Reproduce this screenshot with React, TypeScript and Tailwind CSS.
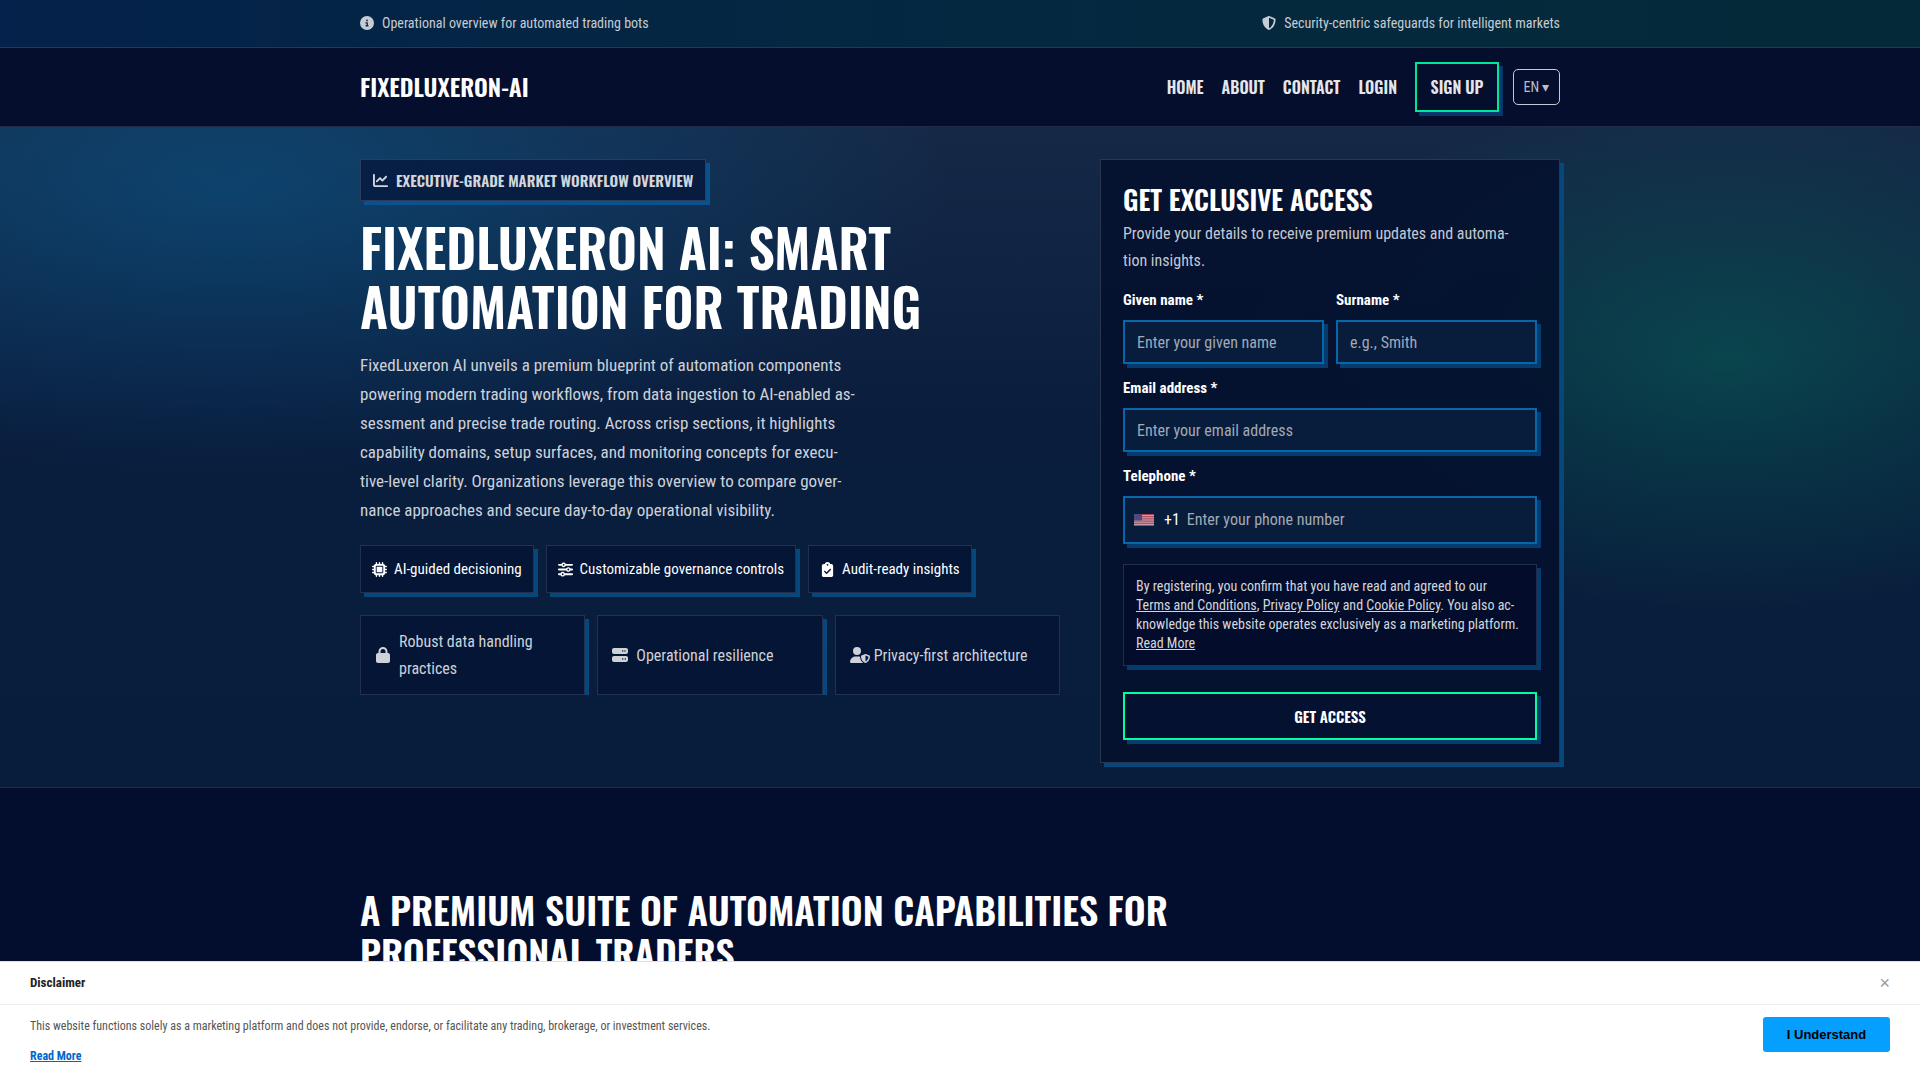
import type { ReactNode } from "react";
import {
  FaChartLine,
  FaCircleInfo,
  FaClipboardCheck,
  FaLock,
  FaMicrochip,
  FaServer,
  FaShieldHalved,
  FaSliders,
  FaUserShield,
} from "react-icons/fa6";

const navLinks = ["Home", "About", "Contact", "Login"];

const chips = [
  { icon: <FaMicrochip size={15} />, label: "AI-guided decisioning" },
  { icon: <FaSliders size={15} />, label: "Customizable governance controls" },
  { icon: <FaClipboardCheck size={15} />, label: "Audit-ready insights" },
];

const features = [
  { icon: <FaLock size={16} />, label: "Robust data handling practices" },
  { icon: <FaServer size={16} />, label: "Operational resilience" },
  { icon: <FaUserShield size={20} />, label: "Privacy-first architecture" },
];

interface IField {
  id: string;
  label: string;
  children: ReactNode;
}

const Field = ({ id, label, children }: IField) => (
  <div className="min-w-0">
    <label htmlFor={id} className="mb-[7px] block text-[15px] leading-[26px] font-bold text-white">
      {label} *
    </label>
    {children}
  </div>
);

const inputStyle =
  "block h-11 w-full border-2 border-[#0667a8] bg-[#081c3b] px-3 text-base text-white placeholder:text-[#a1a9b7] shadow-[4px_4px_0_#043c70] outline-none";

const UsFlag = () => (
  <svg width="20" height="12" viewBox="0 0 40 26" preserveAspectRatio="none" className="shrink-0 opacity-85">
    <rect width="40" height="26" fill="#e8c9ce" />
    {[0, 4, 8, 12, 16, 20, 24].map((y) => (
      <rect key={y} y={y} width="40" height="2" fill="#c93f50" />
    ))}
    <rect width="16" height="14" fill="#56548a" />
  </svg>
);

const AccessForm = () => (
  <form
    onSubmit={(e) => e.preventDefault()}
    className="border border-[#283650] bg-[#040f2d]/85 p-[22px] shadow-[4px_4px_0_#06487c]">
    <h2 className="mb-1 font-['Oswald',sans-serif] text-[27px] leading-[34px] font-semibold text-white uppercase">
      Get exclusive access
    </h2>
    <p className="text-base leading-[27px] text-[#c3c8d0]">
      Provide your details to receive premium updates and automa-
      <br />
      tion insights.
    </p>

    <div className="mt-[13px] flex flex-col gap-[11px]">
      <div className="grid grid-cols-2 gap-3">
        <Field id="given" label="Given name">
          <input id="given" type="text" placeholder="Enter your given name" className={inputStyle} />
        </Field>
        <Field id="surname" label="Surname">
          <input id="surname" type="text" placeholder="e.g., Smith" className={inputStyle} />
        </Field>
      </div>
      <Field id="email" label="Email address">
        <input id="email" type="email" placeholder="Enter your email address" className={inputStyle} />
      </Field>
      <Field id="phone" label="Telephone">
        <div className="flex h-12 items-center border-2 border-[#0667a8] bg-[#081c3b] px-[9px] shadow-[4px_4px_0_#043c70]">
          <UsFlag />
          <span className="ml-[10px] text-base text-white">+1</span>
          <input
            id="phone"
            type="tel"
            placeholder="Enter your phone number"
            className="ml-[7px] min-w-0 flex-1 bg-transparent text-base text-white outline-none placeholder:text-[#a1a9b7]"
          />
        </div>
      </Field>
    </div>

    <div className="mt-5 border border-[#212d4b] bg-[#030d2b] p-3 text-sm leading-[19px] text-[#d3d6dc] shadow-[4px_4px_0_#043c70]">
      By registering, you confirm that you have read and agreed to our
      <br />
      <a href="#terms" className="underline">Terms and Conditions</a>,{" "}
      <a href="#privacy" className="underline">Privacy Policy</a> and{" "}
      <a href="#cookies" className="underline">Cookie Policy</a>. You also ac-
      <br />
      knowledge this website operates exclusively as a marketing platform.
      <br />
      <a href="#more" className="underline">Read More</a>
    </div>

    <button
      type="submit"
      className="mt-[26px] h-12 w-full border-2 border-[#00ff9f] bg-[#041130] font-['Oswald',sans-serif] text-[15px] font-semibold text-white uppercase shadow-[4px_4px_0_#043c70]">
      Get access
    </button>
  </form>
);

const Disclaimer = () => (
  <div className="fixed inset-x-0 bottom-0 h-[119px] border-t border-[#e0e0e0] bg-white">
    <div className="flex h-[43px] items-center justify-between border-b border-[#eeeeee] px-[30px]">
      <h2 className="text-[13px] font-bold text-[#222222]">Disclaimer</h2>
      <button
        type="button"
        aria-label="Close"
        className="font-['Liberation_Sans',sans-serif] text-lg leading-none text-[#999999]">
        ×
      </button>
    </div>
    <div className="flex items-start justify-between px-[30px] pt-3">
      <div className="text-xs leading-[18px] text-[#555555]">
        <p>
          This website functions solely as a marketing platform and does not provide, endorse, or
          facilitate any trading, brokerage, or investment services.
        </p>
        <a href="#disclaimer" className="mt-3 block w-fit font-bold text-[#0066cc] underline">
          Read More
        </a>
      </div>
      <button
        type="button"
        className="h-[35px] w-[127px] rounded-[3px] bg-[#059fff] font-['Liberation_Sans',sans-serif] text-[13px] font-bold text-black">
        I Understand
      </button>
    </div>
  </div>
);

const App = () => {
  return (
    <div className="min-h-screen bg-[#030d2e] font-['Roboto_Condensed',sans-serif] text-[#d3d6dc]">
      {/* Top strip */}
      <div className="border-b border-[#1d3d54] bg-[linear-gradient(90deg,#04224b,#042545_25%,#04293f_60%,#042a38)]">
        <div className="mx-auto flex h-[47px] max-w-[1200px] items-center justify-between pb-0.5 text-sm text-[#c5ccd4]">
          <p className="flex items-center gap-2">
            <FaCircleInfo size={14} /> Operational overview for automated trading bots
          </p>
          <p className="flex items-center gap-2">
            <FaShieldHalved size={14} /> Security-centric safeguards for intelligent markets
          </p>
        </div>
      </div>

      {/* Header */}
      <header className="border-b border-[#1f2b48] bg-[#050f2d]">
        <div className="mx-auto flex h-[78px] max-w-[1200px] items-center justify-between">
          <a
            href="#top"
            className="pb-0.5 font-['Oswald',sans-serif] text-2xl font-semibold text-white uppercase">
            FixedLuxeron-AI
          </a>
          <nav className="flex items-center gap-[18px] font-['Oswald',sans-serif] text-base font-semibold text-[#e4e6ea] uppercase">
            {navLinks.map((link) => (
              <a key={link} href={`#${link.toLowerCase()}`}>
                {link}
              </a>
            ))}
            <a
              href="#signup"
              className="flex h-[50px] w-[84px] items-center justify-center border-2 border-[#00e69a] shadow-[4px_4px_0_#04386b]">
              Sign up
            </a>
            <button
              type="button"
              className="-ml-1 h-9 w-[47px] rounded-[5px] border border-[#c5c9d3] font-['Roboto_Condensed',sans-serif] text-sm font-normal text-[#b9bec9]">
              EN ▾
            </button>
          </nav>
        </div>
      </header>

      {/* Hero */}
      <section className="border-b border-[#1f2b48] bg-[radial-gradient(720px_290px_at_12%_9%,rgba(5,105,165,0.42),transparent),radial-gradient(500px_260px_at_90%_35%,rgba(6,120,95,0.42),transparent),linear-gradient(180deg,#152947,#0a1d3d_45%,#081d3c)]">
        <div className="mx-auto grid max-w-[1200px] grid-cols-[35fr_23fr] gap-10 pt-8 pb-6">
          <div>
            <p className="flex h-[42px] w-fit items-center gap-2 border border-[#2a3d5c] bg-[#06163a]/75 px-3 font-['Oswald',sans-serif] text-[15px] font-semibold text-[#d3d6dc] uppercase shadow-[4px_4px_0_#085290]">
              <FaChartLine size={15} /> Executive-grade market workflow overview
            </p>
            <h1 className="mt-4 font-['Oswald',sans-serif] text-[52px] leading-[59px] font-semibold text-white uppercase">
              FixedLuxeron AI: Smart
              <br />
              Automation for Trading
            </h1>
            <p className="mt-4 text-[17px] leading-[29px] text-[#cdd2d9]">
              FixedLuxeron AI unveils a premium blueprint of automation components
              <br />
              powering modern trading workflows, from data ingestion to AI-enabled as-
              <br />
              sessment and precise trade routing. Across crisp sections, it highlights
              <br />
              capability domains, setup surfaces, and monitoring concepts for execu-
              <br />
              tive-level clarity. Organizations leverage this overview to compare gover-
              <br />
              nance approaches and secure day-to-day operational visibility.
            </p>
            <ul className="mt-5 flex gap-3 text-[15px] text-white">
              {chips.map((chip) => (
                <li
                  key={chip.label}
                  className="flex h-12 items-center gap-[7px] border border-[#23304e] bg-[#051535] px-[11px] shadow-[4px_4px_0_#06487c]">
                  {chip.icon}
                  {chip.label}
                </li>
              ))}
            </ul>
            <ul className="mt-[22px] grid grid-cols-3 gap-3 overflow-hidden text-base leading-[27px] text-[#cdd2d9]">
              {features.map((feature) => (
                <li
                  key={feature.label}
                  className="flex h-20 items-center gap-1 border border-[#23304e] bg-[#051535] px-[14px] shadow-[4px_4px_0_#06487c]">
                  <span className="w-5 shrink-0">{feature.icon}</span>
                  {feature.label}
                </li>
              ))}
            </ul>
          </div>
          <AccessForm />
        </div>
      </section>

      {/* Capabilities */}
      <section className="mx-auto max-w-[1200px] pt-[100px] pb-[104px]">
        <h2 className="font-['Oswald',sans-serif] text-[38px] leading-[43px] font-semibold text-white uppercase">
          A premium suite of automation capabilities for
          <br />
          professional traders
        </h2>
      </section>

      <Disclaimer />
    </div>
  );
};

export default App;
